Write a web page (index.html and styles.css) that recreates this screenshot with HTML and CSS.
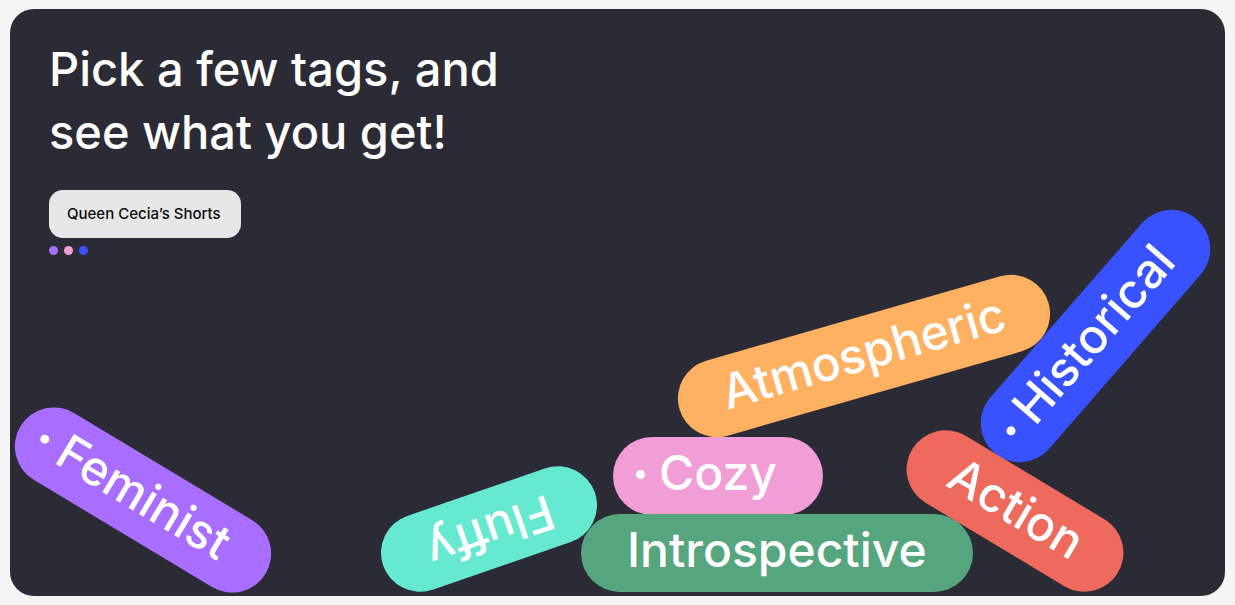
FILE: index.html
```html
<!DOCTYPE html>
<html lang="en">
<head>
<meta charset="utf-8">
<meta name="viewport" content="width=device-width, initial-scale=1">
<title>Pick a few tags</title>
<link rel="stylesheet" href="styles.css">
</head>
<body>
<main class="card">
  <h1 class="title">Pick a few tags, and<br>see what you get!</h1>
  <div class="result">
    <button type="button" class="result-button">Queen Cecia’s Shorts</button>
    <div class="matches">
      <span class="match match-feminist"></span>
      <span class="match match-cozy"></span>
      <span class="match match-historical"></span>
    </div>
  </div>
  <div class="pile">
    <button type="button" class="tag feminist" aria-pressed="true">Feminist</button>
    <button type="button" class="tag fluffy" aria-pressed="false">Fluffy</button>
    <button type="button" class="tag cozy" aria-pressed="true">Cozy</button>
    <button type="button" class="tag introspective" aria-pressed="false">Introspective</button>
    <button type="button" class="tag atmospheric" aria-pressed="false">Atmospheric</button>
    <button type="button" class="tag historical" aria-pressed="true">Historical</button>
    <button type="button" class="tag action" aria-pressed="false">Action</button>
  </div>
</main>
</body>
</html>
```
FILE: styles.css
```css
:root {
  --purple: #a86eff;
  --pink: #f19ed7;
  --blue: #3852ff;
  --white: #fefefe;
}

* { box-sizing: border-box; }

body {
  margin: 0;
  padding: 9px 10px;
  min-height: 100vh;
  display: flex;
  background: #f5f5f5;
  font-family: Inter, "Liberation Sans", sans-serif;
  font-weight: 500;
}

.card {
  position: relative;
  flex: 1;
  display: flex;
  flex-direction: column;
  gap: 27px;
  padding: 28px 39px;
  border-radius: 24px;
  background: #2b2b35;
  overflow: hidden;
}

.title {
  margin: 0;
  color: var(--white);
  font-size: 47px;
  font-weight: 500;
  line-height: 63px;
}

.result {
  display: flex;
  flex-direction: column;
  align-items: flex-start;
  gap: 8px;
}

.result-button {
  padding: 14px 20px 14px 18px;
  border: 0;
  border-radius: 14px;
  background: #e7e7e7;
  color: #0c0c0c;
  font: inherit;
  font-size: 15px;
  line-height: 20px;
}

.matches {
  display: flex;
  gap: 6px;
}

.match {
  width: 9px;
  height: 9px;
  border-radius: 50%;
}

.match-feminist { background: var(--purple); }
.match-cozy { background: var(--pink); }
.match-historical { background: var(--blue); }

/* Free canvas on which the tags have fallen and come to rest */
.pile {
  position: absolute;
  inset: 0;
  pointer-events: none;
}

.tag {
  position: absolute;
  height: 78px;
  padding: 0 0 6px 46px;
  border: 0;
  border-radius: 39px;
  color: var(--white);
  font: inherit;
  font-size: 48px;
  line-height: 60px;
  text-align: left;
  white-space: nowrap;
  pointer-events: auto;
}

.tag[aria-pressed="true"]::before {
  content: "";
  position: absolute;
  left: 23px;
  top: 33px;
  width: 9px;
  height: 9px;
  border-radius: 50%;
  background: var(--white);
}

.feminist { left: -10px; bottom: 57px; width: 286px; background: var(--purple); transform: rotate(31deg); }
.fluffy { left: 367px; bottom: 28px; width: 224px; background: #65ead1; transform: rotate(161deg); }
.cozy { left: 603px; bottom: 81px; width: 210px; background: var(--pink); }
.introspective { left: 571px; bottom: 4px; width: 392px; background: #55a67f; }
.atmospheric { left: 662px; bottom: 201px; width: 384px; background: #ffb162; transform: rotate(-16deg); }
.historical { left: 931px; bottom: 221px; width: 309px; background: var(--blue); transform: rotate(-49deg); }
.action { left: 885px; bottom: 46px; width: 240px; background: #ed6a5c; transform: rotate(31deg); }
```
